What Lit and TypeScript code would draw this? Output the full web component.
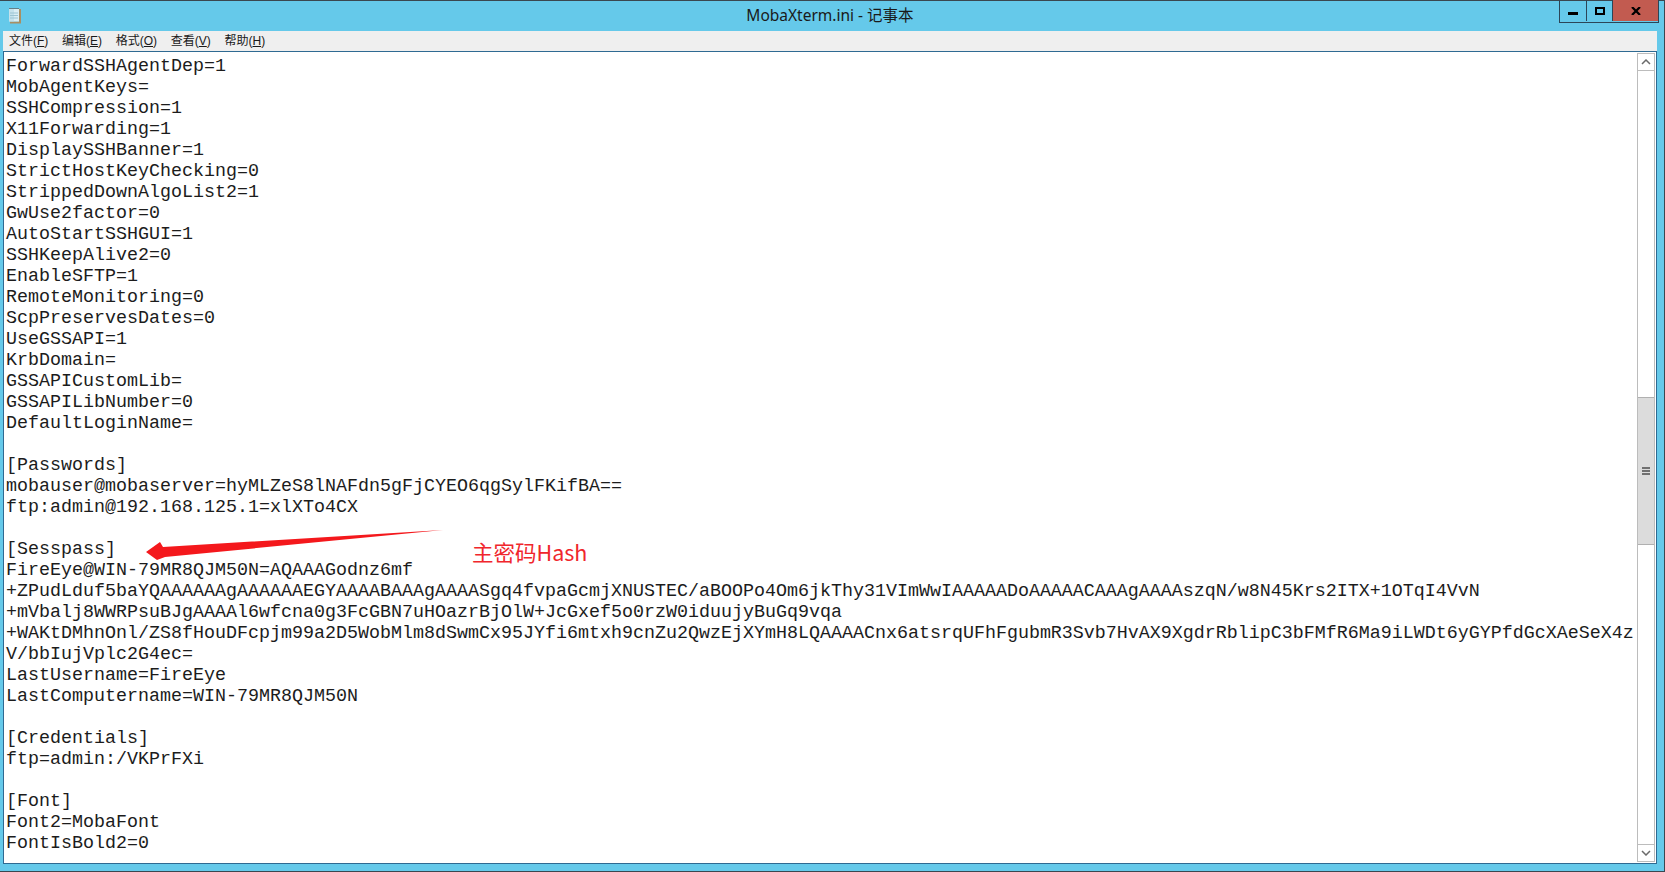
import { LitElement, html, css } from "lit";
import { customElement } from "lit/decorators.js";

const TEXT = `ForwardSSHAgentDep=1
MobAgentKeys=
SSHCompression=1
X11Forwarding=1
DisplaySSHBanner=1
StrictHostKeyChecking=0
StrippedDownAlgoList2=1
GwUse2factor=0
AutoStartSSHGUI=1
SSHKeepAlive2=0
EnableSFTP=1
RemoteMonitoring=0
ScpPreservesDates=0
UseGSSAPI=1
KrbDomain=
GSSAPICustomLib=
GSSAPILibNumber=0
DefaultLoginName=

[Passwords]
mobauser@mobaserver=hyMLZeS8lNAFdn5gFjCYEO6qgSylFKifBA==
ftp:admin@192.168.125.1=xlXTo4CX

[Sesspass]
FireEye@WIN-79MR8QJM50N=AQAAAGodnz6mf
+ZPudLduf5baYQAAAAAAgAAAAAAEGYAAAABAAAgAAAASgq4fvpaGcmjXNUSTEC/aBOOPo4Om6jkThy31VImWwIAAAAADoAAAAACAAAgAAAAszqN/w8N45Krs2ITX+1OTqI4VvN
+mVbalj8WWRPsuBJgAAAAl6wfcna0g3FcGBN7uHOazrBjOlW+JcGxef5o0rzW0iduujyBuGq9vqa
+WAKtDMhnOnl/ZS8fHouDFcpjm99a2D5WobMlm8dSwmCx95JYfi6mtxh9cnZu2QwzEjXYmH8LQAAAACnx6atsrqUFhFgubmR3Svb7HvAX9XgdrRblipC3bFMfR6Ma9iLWDt6yGYPfdGcXAeSeX4z
V/bbIujVplc2G4ec=
LastUsername=FireEye
LastComputername=WIN-79MR8QJM50N

[Credentials]
ftp=admin:/VKPrFXi

[Font]
Font2=MobaFont
FontIsBold2=0`;

const MENUS: [string, string][] = [["文件(", "F"], ["编辑(", "E"], ["格式(", "O"], ["查看(", "V"], ["帮助(", "H"]];

@customElement("app-root")
export class AppRoot extends LitElement {
  static styles = css`
    :host { display: block; width: 1665px; height: 872px; overflow: hidden; }
    .win { position: relative; box-sizing: border-box; width: 1665px; height: 872px; background: #65c9ea; border: 1px solid #3a4750; border-width: 1px 1px 1px 0; display: flex; flex-direction: column; font-family: "Liberation Sans", "Noto Sans CJK SC", sans-serif; }
    .title { height: 30px; flex: none; display: flex; align-items: center; padding-left: 7px; position: relative; }
    .appicon { width: 15px; height: 17px; display: block; margin-top: -2px; }
    .title-text { position: absolute; left: 0; right: 4px; top: 5px; text-align: center; font-size: 15.5px; line-height: 18px; color: #1a1a1a; font-family: "Noto Sans", "Noto Sans CJK SC", sans-serif; }
    .ctrls { position: absolute; right: 5px; top: -1px; height: 22px; display: flex; border: 1px solid #2c4557; border-top: none; }
    .ctrl { display: flex; align-items: center; justify-content: center; height: 21px; box-sizing: border-box; }
    .min { width: 27px; border-right: 1px solid #2c4557; }
    .max { width: 26px; border-right: 1px solid #2c4557; }
    .close { width: 45px; background: #c25b50; }
    .client { flex: 1; margin: 0 7px 7px 3px; display: flex; flex-direction: column; min-height: 0; }
    .menu { height: 21px; flex: none; box-sizing: border-box; padding-bottom: 3px; background: #efefef; display: flex; align-items: center; padding-left: 6px; gap: 13.7px; font-size: 12px; color: #1a1a1a; border-bottom: 1px solid #2f6a92; }
    .menu u { text-decoration: underline; }
    .edit { flex: 1; min-height: 0; background: #fff; display: flex; border: 1px solid #2f6a92; border-top: none; border-width: 0 1px 1px 1px; }
    .text { flex: 1; min-width: 0; margin: 0; padding: 4px 0 0 2px; font: 18.34px/21px "Liberation Mono", monospace; color: #1c1c1c; white-space: pre; overflow: hidden; }
    .sb { width: 18px; flex: none; box-sizing: border-box; margin: 1px 1px 1px 0; display: flex; flex-direction: column; border: 1px solid #bcbcbc; border-width: 0 1px 0 1px; background: #fff; }
    .arrow { height: 16px; flex: none; display: flex; align-items: center; justify-content: center; border-top: 1px solid #bcbcbc; border-bottom: 1px solid #bcbcbc; }
    .track1 { height: 326px; flex: none; }
    .thumb { height: 148px; flex: none; box-sizing: border-box; background: #dcdcdc; border: 1px solid #b0b0b0; border-width: 1px 0; display: flex; align-items: center; justify-content: center; }
    .track2 { flex: 1; }
    .anno { position: absolute; left: 472px; top: 539px; font-size: 21.5px; line-height: 24px; color: #f0262c; font-family: "Noto Sans CJK SC", sans-serif; }
    .anno-arrow { position: absolute; left: 140px; top: 525px; }
  `;

  render() {
    return html`<div class="win">
      <div class="title">
        <svg class="appicon" viewBox="0 0 15 17">
          <path d="M12 2h2v14.5H3V14.5h9z" fill="#a98f63"/>
          <rect x="2" y="1.5" width="10" height="13" fill="#dbeef4"/>
          <rect x="2" y="1.5" width="5" height="13" fill="#b6dbe6" opacity=".6"/>
          <path d="M3 6h8M3 8.5h8M3 11h8" stroke="#9cc4d2"/>
          <path d="M2.5 1.5h9" stroke="#222" stroke-dasharray="1 1"/>
        </svg>
        <div class="title-text">MobaXterm.ini - 记事本</div>
        <div class="ctrls">
          <div class="ctrl min"><svg width="10" height="10" viewBox="0 0 10 10"><rect y="6" width="10" height="3"/></svg></div>
          <div class="ctrl max"><svg width="10" height="8" viewBox="0 0 10 8"><path d="M0 0h10v8H0zM2 2v4h6V2z" fill-rule="evenodd"/></svg></div>
          <div class="ctrl close"><svg width="10" height="8" viewBox="0 0 10 8"><path d="M1 0l8 8M9 0L1 8" stroke="#000" stroke-width="2.2"/></svg></div>
        </div>
      </div>
      <div class="client">
        <div class="menu">${MENUS.map(([a, b]) => html`<span>${a}<u>${b}</u>)</span>`)}</div>
        <div class="edit">
          <pre class="text">${TEXT}</pre>
          <div class="sb">
            <div class="arrow"><svg width="10" height="6" viewBox="0 0 10 6"><path d="M1 5l4-4 4 4" fill="none" stroke="#6a6a6a" stroke-width="1.5"/></svg></div>
            <div class="track1"></div>
            <div class="thumb"><svg width="8" height="8" viewBox="0 0 8 8" fill="#707070"><rect width="8" height="2"/><rect y="3" width="8" height="2"/><rect y="6" width="8" height="2"/></svg></div>
            <div class="track2"></div>
            <div class="arrow"><svg width="10" height="6" viewBox="0 0 10 6"><path d="M1 1l4 4 4-4" fill="none" stroke="#6a6a6a" stroke-width="1.5"/></svg></div>
          </div>
        </div>
      </div>
      <svg class="anno-arrow" width="310" height="45" viewBox="140 525 310 45"><path d="M443 529L163 546 160 541 146 551 157 559 165 556z" fill="#f4181c"/></svg>
      <div class="anno">主密码Hash</div>
    </div>`;
  }
}
